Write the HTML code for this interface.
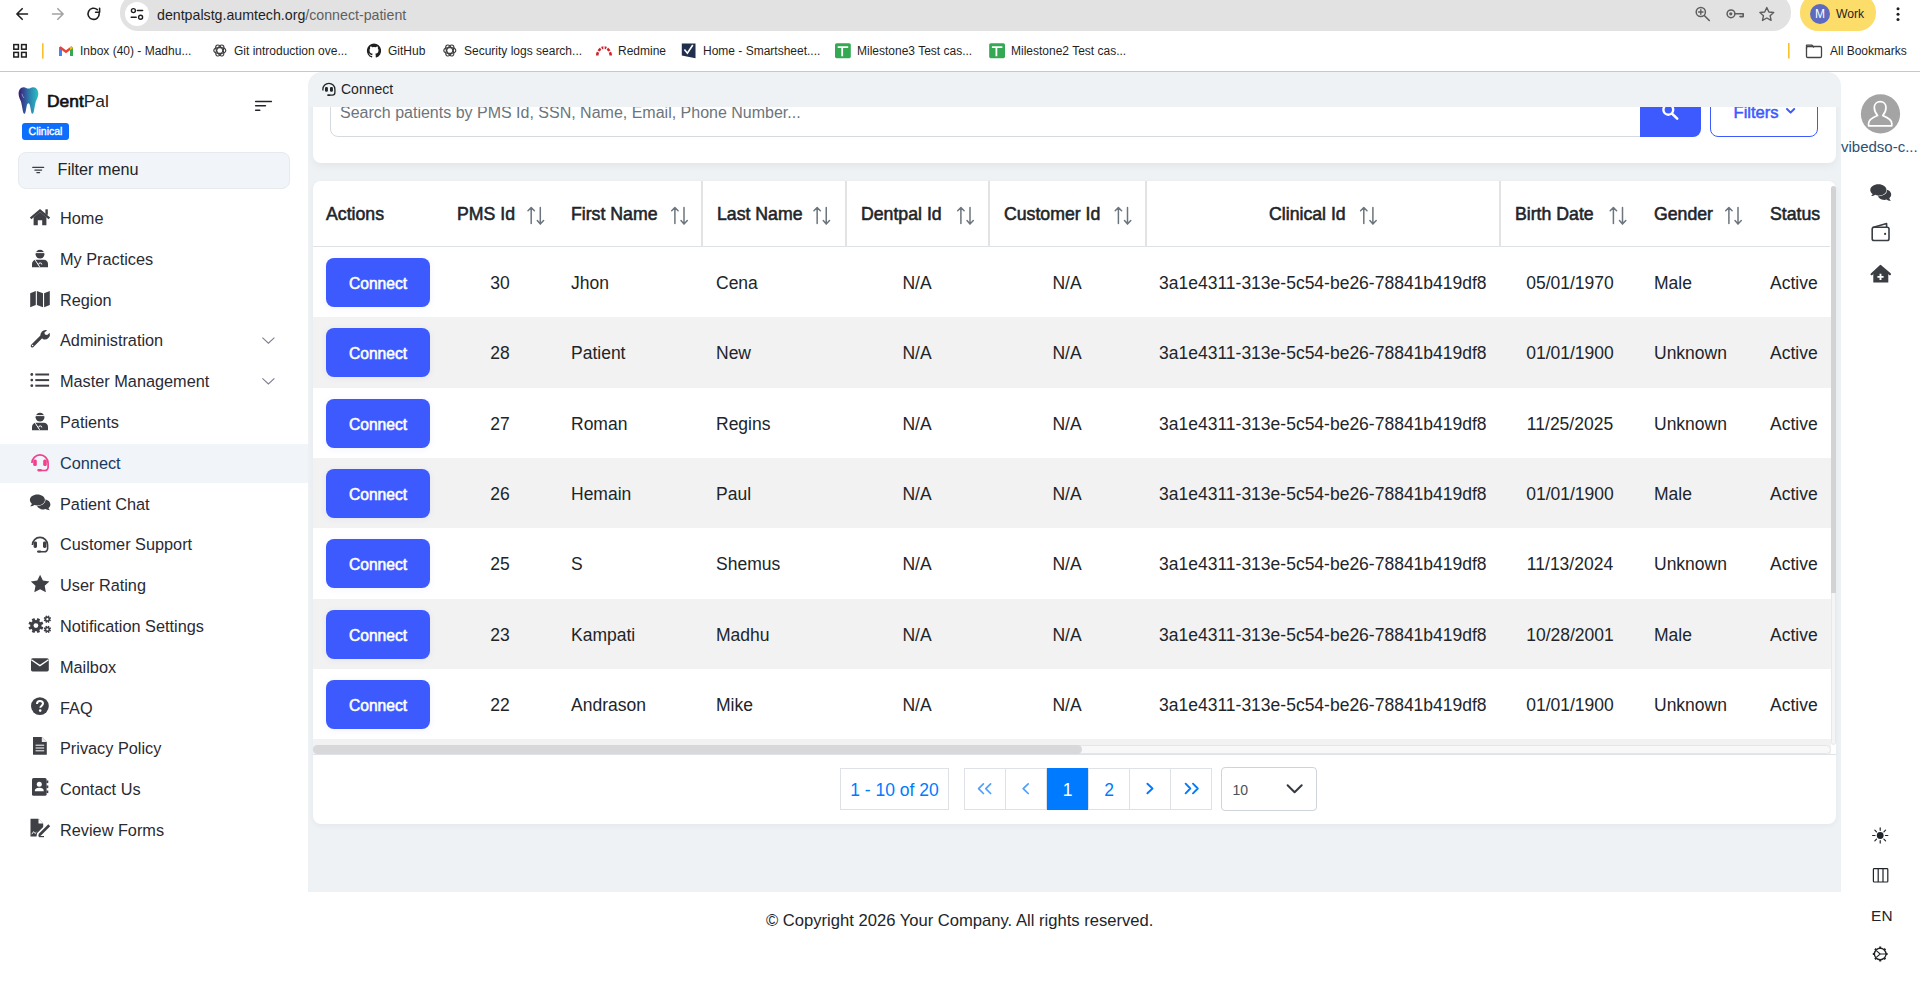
<!DOCTYPE html>
<html><head><meta charset="utf-8">
<style>
*{box-sizing:border-box;margin:0;padding:0}
html,body{width:1920px;height:982px;overflow:hidden;background:#fff;font-family:"Liberation Sans",sans-serif;color:#212529;position:relative}
.a{position:absolute}
.t{position:absolute;white-space:nowrap;line-height:1}
/* chrome */
#omni{left:120px;top:-6px;width:1671px;height:37px;border-radius:18px;background:#e2e2e2}
#siteinfo{left:125px;top:2px;width:24px;height:24px;border-radius:50%;background:#fff}
#url{left:157px;top:7.5px;font-size:14.2px;color:#1f1f1f}
#url span{color:#5f5f5f}
#work{left:1800px;top:-6px;width:76px;height:37px;border-radius:18px;background:#fcdd6a}
#mcirc{left:1810px;top:4px;width:20px;height:20px;border-radius:50%;background:#5c6bc0;color:#fff;font-size:12px;text-align:center;line-height:20px}
.bm{position:absolute;top:44px;font-size:12px;color:#1f1f1f;white-space:nowrap;line-height:14px}
#chromeline{left:0;top:71px;width:1920px;height:1px;background:#c8c8c8}
/* sidebar */
.mi{position:absolute;left:60px;font-size:16.3px;color:#2a2a33;white-space:nowrap;line-height:1}
.ic{position:absolute;left:30px}
/* main */
#main{left:308px;top:72px;width:1533px;height:820px;background:#eff2f5;border-radius:14px 14px 0 0}
.card{position:absolute;background:#fff;border-radius:8px}
.th{position:absolute;top:206px;font-size:17.7px;font-weight:normal;-webkit-text-stroke:0.55px #212529;color:#212529;white-space:nowrap;line-height:1}
.vl{position:absolute;top:181px;width:2px;height:66px;background:#e3e3e3}
.row{position:absolute;left:313px;width:1518px;height:70.3px}
.td{position:absolute;font-size:17.5px;color:#212529;white-space:nowrap;line-height:1}
.btn{position:absolute;left:326px;width:104px;height:49px;border-radius:8px;background:#3d5afe;color:#fff;font-weight:normal;-webkit-text-stroke:0.55px #fff;font-size:15.6px;text-align:center;line-height:52px;box-shadow:0 1px 6px rgba(61,90,254,.08)}
.pg{position:absolute;top:768px;height:42px;border:1px solid #dee2e6;color:#007bff;font-size:17.5px;text-align:center;line-height:42px}
.ri{position:absolute}
</style></head><body>
<!-- ============ BROWSER CHROME ============ -->
<div class="a" id="omni"></div>
<div class="a" id="siteinfo"></div>
<div class="t" id="url">dentpalstg.aumtech.org<span>/connect-patient</span></div>
<div class="a" id="work"></div>
<div class="a" id="mcirc">M</div>
<div class="t" style="left:1836px;top:8.1px;font-size:12.2px;color:#1f1f1f">Work</div>
<div class="a" id="chromeline"></div>
<svg class="a" style="left:0;top:0" width="1920" height="72" viewBox="0 0 1920 72">
<g fill="none" stroke-linecap="round" stroke-linejoin="round">
 <path d="M17 14H27.5M22.2 8.7L16.9 14L22.2 19.3" stroke="#1f1f1f" stroke-width="1.6"/>
 <path d="M63 14H52.5M57.8 8.7L63.1 14L57.8 19.3" stroke="#a3a3a3" stroke-width="1.6"/>
 <path d="M99.2 13.5A5.6 5.6 0 1 1 97.3 9.6" stroke="#1f1f1f" stroke-width="1.6"/>
 <path d="M99.6 8.2V12.2H95.6" stroke="#1f1f1f" stroke-width="1.6"/>
 <circle cx="133.4" cy="10.6" r="2" stroke="#1f1f1f" stroke-width="1.4"/>
 <path d="M137.4 10.6H142.6M131.2 17.3H136.2" stroke="#1f1f1f" stroke-width="1.5"/>
 <circle cx="140.6" cy="17.3" r="2" stroke="#1f1f1f" stroke-width="1.4"/>
 <circle cx="1700.8" cy="12" r="4.6" stroke="#5e5e5e" stroke-width="1.5"/>
 <path d="M1704.3 15.5L1709.3 20.5" stroke="#5e5e5e" stroke-width="1.6"/>
 <path d="M1700.8 9.8V14.2M1698.6 12H1703" stroke="#5e5e5e" stroke-width="1.4"/>
 <circle cx="1731" cy="13.8" r="3.9" stroke="#5e5e5e" stroke-width="1.5"/>
 <path d="M1734.8 13.8H1743.2V16.6H1740" stroke="#5e5e5e" stroke-width="1.6"/>
 <path d="M1766.8 7.6L1768.9 12L1773.7 12.5L1770.1 15.7L1771.1 20.4L1766.8 18L1762.5 20.4L1763.5 15.7L1759.9 12.5L1764.7 12Z" stroke="#5e5e5e" stroke-width="1.4"/>
 <rect x="1806.5" y="46.5" width="15" height="11" rx="1.2" stroke="#444" stroke-width="1.3"/>
 <path d="M1806.5 48.5V45.2H1812L1813.6 47" stroke="#444" stroke-width="1.3"/>
</g>
<g fill="#1f1f1f">
 <circle cx="1730.8" cy="13.8" r="1.6" fill="#5e5e5e"/>
 <circle cx="1898" cy="8.8" r="1.5"/><circle cx="1898" cy="14.2" r="1.5"/><circle cx="1898" cy="19.6" r="1.5"/>
 <g fill="none" stroke="#1f1f1f" stroke-width="1.5"><rect x="13.8" y="44.6" width="4.6" height="4.6"/><rect x="21.6" y="44.6" width="4.6" height="4.6"/><rect x="13.8" y="52.4" width="4.6" height="4.6"/><rect x="21.6" y="52.4" width="4.6" height="4.6"/></g>
 <rect x="42" y="43.2" width="1.6" height="15.5" fill="#fbc02d"/>
 <rect x="1788" y="43" width="1.6" height="15.5" fill="#fbc02d"/>
</g>
<!-- gmail -->
<g>
 <path d="M59 47.5V56H62V50.2L66 53.3L70 50.2V56H73V47.5L71.3 46.2L66 50.2L60.7 46.2Z" fill="#ea4335"/>
 <path d="M59 47.5V56H62V50.2Z" fill="#4285f4"/><path d="M73 47.5V56H70V50.2Z" fill="#34a853"/>
 <path d="M70 50.2L73 47.9V47.5L71.3 46.2L70 47.2Z" fill="#fbbc04"/>
</g>
<!-- openai style icons -->
<g fill="none" stroke="#3c3c3c" stroke-width="1.15"><ellipse cx="219.8" cy="50.5" rx="6" ry="2.9" transform="rotate(0 219.8 50.5)"/><ellipse cx="219.8" cy="50.5" rx="6" ry="2.9" transform="rotate(60 219.8 50.5)"/><ellipse cx="219.8" cy="50.5" rx="6" ry="2.9" transform="rotate(120 219.8 50.5)"/><ellipse cx="449.8" cy="50.5" rx="6" ry="2.9" transform="rotate(0 449.8 50.5)"/><ellipse cx="449.8" cy="50.5" rx="6" ry="2.9" transform="rotate(60 449.8 50.5)"/><ellipse cx="449.8" cy="50.5" rx="6" ry="2.9" transform="rotate(120 449.8 50.5)"/></g>
<!-- github -->
<path d="M374 43.5A7.2 7.2 0 0 0 371.7 57.5C372.1 57.6 372.2 57.3 372.2 57.1V55.8C370.2 56.2 369.8 54.9 369.8 54.9C369.5 54.1 369 53.9 369 53.9C368.3 53.4 369.1 53.4 369.1 53.4C369.8 53.5 370.2 54.2 370.2 54.2C370.8 55.3 371.9 55 372.3 54.8C372.4 54.3 372.6 54 372.8 53.8C371.2 53.6 369.5 53 369.5 50.3C369.5 49.5 369.8 48.9 370.2 48.4C370.1 48.2 369.9 47.5 370.3 46.5C370.3 46.5 370.9 46.3 372.3 47.2A7 7 0 0 1 375.7 47.2C377.1 46.3 377.7 46.5 377.7 46.5C378.1 47.5 377.9 48.2 377.8 48.4C378.2 48.9 378.5 49.5 378.5 50.3C378.5 53 376.8 53.6 375.2 53.8C375.5 54 375.7 54.4 375.7 55.1V57.1C375.7 57.3 375.8 57.6 376.3 57.5A7.2 7.2 0 0 0 374 43.5Z" fill="#1f1f1f"/>
<!-- redmine -->
<g fill="#d1212b"><path d="M596 55.5C596 51 599.5 46.2 604 46.2C608.5 46.2 612 51 612 55.5H609.4C609.4 52.5 607 48.8 604 48.8C601 48.8 598.6 52.5 598.6 55.5Z"/></g>
<g stroke="#fff" stroke-width="1.2"><path d="M596.5 50.6L599.8 52.4M600.2 46.6L601.8 49.8M607.8 46.6L606.2 49.8M611.5 50.6L608.2 52.4M604 45.5V48.9"/></g>
<!-- smartsheet -->
<path d="M681.8 43.4H695.5V58.3L681.8 55.6Z" fill="#1f2f4d"/>
<path d="M684.4 49.5L687.4 53.2L692.8 45" fill="none" stroke="#fff" stroke-width="1.6"/>
<!-- sheets -->
<rect x="835" y="43.2" width="15.8" height="15" rx="1.6" fill="#34a853"/>
<path d="M837.7 47.2H848.2M842.2 47.2V56.2" stroke="#fff" stroke-width="1.8"/>
<rect x="989.2" y="43.2" width="15.8" height="15" rx="1.6" fill="#34a853"/>
<path d="M991.9 47.2H1002.4M996.4 47.2V56.2" stroke="#fff" stroke-width="1.8"/>
</svg>


<div class="bm" style="left:80px">Inbox (40) - Madhu...</div>
<div class="bm" style="left:234px">Git introduction ove...</div>
<div class="bm" style="left:388px">GitHub</div>
<div class="bm" style="left:464px">Security logs search...</div>
<div class="bm" style="left:618px">Redmine</div>
<div class="bm" style="left:703px">Home - Smartsheet....</div>
<div class="bm" style="left:857px">Milestone3 Test cas...</div>
<div class="bm" style="left:1011px">Milestone2 Test cas...</div>
<div class="bm" style="left:1830px">All Bookmarks</div>

<!-- ============ SIDEBAR ============ -->
<div class="t" style="left:47px;top:92.6px;font-size:17.4px;color:#111"><span style="-webkit-text-stroke:0.7px #111">Dent</span><span style="color:#222">Pal</span></div>
<div class="a" style="left:22px;top:123px;width:47px;height:17px;border-radius:3px;background:#0d6efd;color:#fff;font-size:10.5px;-webkit-text-stroke:0.35px #fff;text-align:center;line-height:17px">Clinical</div>
<div class="a" style="left:18px;top:152px;width:272px;height:37px;border-radius:8px;background:#f1f4f8;border:1px solid #e6eaef"></div>
<div class="t" style="left:57.5px;top:161px;font-size:16.2px;color:#212529">Filter menu</div>
<div class="a" style="left:0;top:444px;width:308px;height:39px;background:#f1f4f8"></div>

<svg class="a" style="left:0;top:0" width="308" height="892" viewBox="0 0 308 892">
<defs><linearGradient id="tg" x1="0" x2="1" y1="0" y2="0"><stop offset="0" stop-color="#3b1a78"/><stop offset="0.55" stop-color="#2b7fae"/><stop offset="1" stop-color="#2cc0c4"/></linearGradient></defs>
<path d="M23.6 87.2C20.2 87.2 18.6 90.5 18.6 93.8C18.6 97.2 20.3 99.6 21 101.5C21.6 104 22 106.5 22.6 109.5C23 112.2 23.6 113.8 24.4 113.8C25.6 113.8 25.8 110.3 26.6 106.5C27.1 104.5 27.6 103.3 28.4 103.3C29.2 103.3 29.7 104.5 30.2 106.5C31 110.3 31.2 113.8 32.4 113.8C33.3 113.8 33.8 112.2 34.2 109.5C34.8 106.5 35.2 104 35.8 101.5C36.5 99.6 38.3 97.2 38.3 93.8C38.3 90.5 36.6 87.2 33.2 87.2C31 87.2 30 88.6 28.4 88.6C26.8 88.6 25.8 87.2 23.6 87.2Z" fill="url(#tg)"/>
<path d="M22 93.8Q22 96 24 98" stroke="#fff" stroke-width="0.6" fill="none" opacity="0.7"/>
<g fill="#212529"><rect x="254.9" y="100.7" width="17.2" height="1.5" rx=".7"/><rect x="254.9" y="105" width="11.3" height="1.5" rx=".7"/><rect x="254.9" y="109.4" width="5.6" height="1.5" rx=".7"/></g>
<g stroke="#3a3f44" stroke-width="1.3" stroke-linecap="round"><path d="M32.8 167.4H43.6M34.9 170.1H41.6M36.9 172.6H39.6"/></g>
<g fill="none" stroke="#7d7d92" stroke-width="1.1"><path d="M262.4 337.6L268.4 343.2L274.4 337.6"/><path d="M262.4 378.4L268.4 384L274.4 378.4"/></g>
<g fill="#3f4046">
 <!-- home -->
 <path d="M30.6 218.3L40 210.6L49.4 218.3" fill="none" stroke="#3f4046" stroke-width="2.3"/>
 <rect x="45.4" y="209.3" width="2.4" height="5.5"/>
 <path d="M33.6 217.2L40 212L46.4 217.2V225.3H42.2V220.3H37.8V225.3H33.6Z"/>
 <!-- user-md my practices -->
 <g id="umd">
 <path d="M35.6 254.2A4.4 4.4 0 0 1 44.4 254.2A4.4 4.4 0 0 1 35.6 254.2Z"/>
 <path d="M35.7 252.6H44.3" stroke="#fff" stroke-width="1"/>
 <path d="M32 267.2V264C32 261.5 33.8 259.8 36.2 259.8H43.8C46.2 259.8 48 261.5 48 264V267.2Z"/>
 <path d="M35.3 260.2L39.6 266.8M38.6 264.5A1.6 1.6 0 1 1 41.8 264.5" stroke="#fff" stroke-width="1" fill="none"/>
 </g>
 <use href="#umd" y="163"/>
 <!-- map -->
 <path d="M30.2 293.3L35.8 291V305L30.2 307.2Z"/><path d="M36.9 291L43 293.2V307.2L36.9 305Z"/><path d="M44.1 293.2L49.8 291V305L44.1 307.2Z"/>
 <!-- wrench -->
 <path d="M32.3 345.8L41.8 336.3" stroke="#3f4046" stroke-width="3.2" stroke-linecap="round"/>
 <path d="M47.2 330.2A5.2 5.2 0 0 0 40.7 336.8L43.1 339.2A5.2 5.2 0 0 0 49.7 332.7L47.2 335.1L44.9 334.6L44.4 332.4Z"/>
 <circle cx="32.6" cy="345.5" r="0.8" fill="#fff"/>
 <!-- list -->
 <circle cx="31.8" cy="374.5" r="1.4"/><circle cx="31.8" cy="380.1" r="1.4"/><circle cx="31.8" cy="385.7" r="1.4"/>
 <rect x="35.3" y="373.5" width="13.8" height="2"/><rect x="35.3" y="379.1" width="13.8" height="2"/><rect x="35.3" y="384.7" width="13.8" height="2"/>
 <!-- headset connect (pink) -->
 <g id="hs" fill="#f0418f">
 <path d="M31.9 463A8.1 8.1 0 0 1 48.1 463V467.3A3.2 3.2 0 0 1 44.9 470.5H41" fill="none" stroke="#f0418f" stroke-width="1.7"/>
 <rect x="33.2" y="459.4" width="3.6" height="6.6" rx="1.5"/><rect x="43.2" y="459.4" width="3.6" height="6.6" rx="1.5"/>
 <rect x="37.3" y="469" width="4.6" height="2.4" rx="1.1"/>
 </g>
 <!-- comments -->
 <path d="M43.6 499.2C47.4 499.2 50.4 501.6 50.4 504.6C50.4 506 49.7 507.3 48.5 508.2C48.8 509.2 49.5 509.9 50.1 510.3C48 510.3 46.6 509.6 45.7 509.1C45 509.4 44.3 509.6 43.6 509.6C39.8 509.6 36.8 507.2 36.8 504.6C36.8 501.6 39.8 499.2 43.6 499.2Z"/>
 <path d="M37.4 494.6C33.3 494.6 29.9 497 29.9 500C29.9 501.5 30.7 502.8 31.9 503.7C31.6 504.9 30.6 505.8 30.1 506.2C31.9 506.2 33.4 505.5 34.4 504.9C35.3 505.2 36.3 505.4 37.4 505.4C41.5 505.4 44.9 503 44.9 500C44.9 497 41.5 494.6 37.4 494.6Z" stroke="#fff" stroke-width="1.3" paint-order="stroke"/>
 <!-- headset support (dark) -->
 <g fill="#3f4046">
 <path d="M32.4 545A7.6 7.6 0 0 1 47.6 545V548.6A3.2 3.2 0 0 1 44.4 551.8H40.8" fill="none" stroke="#3f4046" stroke-width="1.6"/>
 <rect x="33.6" y="541.6" width="3.4" height="6.4" rx="1.4"/><rect x="43" y="541.6" width="3.4" height="6.4" rx="1.4"/>
 <rect x="37" y="550.4" width="4.4" height="2.3" rx="1.1"/>
 </g>
 <!-- star -->
 <path d="M40.1 574.8L42.9 580.6L49.4 581.4L44.7 585.8L45.9 592.3L40.1 589.2L34.3 592.3L35.5 585.8L30.8 581.4L37.3 580.6Z"/>
 <!-- cogs -->
<circle cx="35.9" cy="625.6" r="5.6" fill="#3f4046"/><rect x="34.45" y="618.10" width="2.9" height="7.50" fill="#3f4046" transform="rotate(22.5 35.9 625.6)"/><rect x="34.45" y="618.10" width="2.9" height="7.50" fill="#3f4046" transform="rotate(67.5 35.9 625.6)"/><rect x="34.45" y="618.10" width="2.9" height="7.50" fill="#3f4046" transform="rotate(112.5 35.9 625.6)"/><rect x="34.45" y="618.10" width="2.9" height="7.50" fill="#3f4046" transform="rotate(157.5 35.9 625.6)"/><rect x="34.45" y="618.10" width="2.9" height="7.50" fill="#3f4046" transform="rotate(202.5 35.9 625.6)"/><rect x="34.45" y="618.10" width="2.9" height="7.50" fill="#3f4046" transform="rotate(247.5 35.9 625.6)"/><rect x="34.45" y="618.10" width="2.9" height="7.50" fill="#3f4046" transform="rotate(292.5 35.9 625.6)"/><rect x="34.45" y="618.10" width="2.9" height="7.50" fill="#3f4046" transform="rotate(337.5 35.9 625.6)"/><circle cx="35.9" cy="625.6" r="2.4" fill="#fff"/><circle cx="47.4" cy="619.2" r="2.6" fill="#3f4046"/><rect x="46.65" y="615.50" width="1.5" height="3.70" fill="#3f4046" transform="rotate(22.5 47.4 619.2)"/><rect x="46.65" y="615.50" width="1.5" height="3.70" fill="#3f4046" transform="rotate(67.5 47.4 619.2)"/><rect x="46.65" y="615.50" width="1.5" height="3.70" fill="#3f4046" transform="rotate(112.5 47.4 619.2)"/><rect x="46.65" y="615.50" width="1.5" height="3.70" fill="#3f4046" transform="rotate(157.5 47.4 619.2)"/><rect x="46.65" y="615.50" width="1.5" height="3.70" fill="#3f4046" transform="rotate(202.5 47.4 619.2)"/><rect x="46.65" y="615.50" width="1.5" height="3.70" fill="#3f4046" transform="rotate(247.5 47.4 619.2)"/><rect x="46.65" y="615.50" width="1.5" height="3.70" fill="#3f4046" transform="rotate(292.5 47.4 619.2)"/><rect x="46.65" y="615.50" width="1.5" height="3.70" fill="#3f4046" transform="rotate(337.5 47.4 619.2)"/><circle cx="47.4" cy="619.2" r="1.1" fill="#fff"/><circle cx="47.4" cy="629.4" r="2.6" fill="#3f4046"/><rect x="46.65" y="625.70" width="1.5" height="3.70" fill="#3f4046" transform="rotate(22.5 47.4 629.4)"/><rect x="46.65" y="625.70" width="1.5" height="3.70" fill="#3f4046" transform="rotate(67.5 47.4 629.4)"/><rect x="46.65" y="625.70" width="1.5" height="3.70" fill="#3f4046" transform="rotate(112.5 47.4 629.4)"/><rect x="46.65" y="625.70" width="1.5" height="3.70" fill="#3f4046" transform="rotate(157.5 47.4 629.4)"/><rect x="46.65" y="625.70" width="1.5" height="3.70" fill="#3f4046" transform="rotate(202.5 47.4 629.4)"/><rect x="46.65" y="625.70" width="1.5" height="3.70" fill="#3f4046" transform="rotate(247.5 47.4 629.4)"/><rect x="46.65" y="625.70" width="1.5" height="3.70" fill="#3f4046" transform="rotate(292.5 47.4 629.4)"/><rect x="46.65" y="625.70" width="1.5" height="3.70" fill="#3f4046" transform="rotate(337.5 47.4 629.4)"/><circle cx="47.4" cy="629.4" r="1.1" fill="#fff"/>
 <!-- envelope -->
 <rect x="31" y="658.3" width="17.8" height="13.1" rx="1.6"/>
 <path d="M31.3 659.8L39.9 665.6L48.5 659.8" stroke="#fff" stroke-width="1.3" fill="none"/>
 <!-- question -->
 <circle cx="39.9" cy="706.1" r="8.9"/>
 <path d="M37 703.9C37 702.1 38.3 700.9 40 700.9C41.7 700.9 43 702 43 703.6C43 705.6 40.3 705.8 40.3 707.8" stroke="#fff" stroke-width="2" fill="none"/>
 <circle cx="40.2" cy="710.6" r="1.3" fill="#fff"/>
 <!-- file-alt -->
 <path d="M33 737H41.8L46.8 742V754.8H33Z"/>
 <path d="M41.8 737V742H46.8" fill="#fff" opacity="0.9"/>
 <path d="M35.6 745.2H44.2M35.6 748H44.2M35.6 750.8H44.2" stroke="#fff" stroke-width="1"/>
 <!-- address-book -->
 <rect x="32" y="778" width="14.6" height="17.8" rx="1.6"/>
 <rect x="46.4" y="780.5" width="1.9" height="2.6"/><rect x="46.4" y="785.5" width="1.9" height="2.6"/><rect x="46.4" y="790.5" width="1.9" height="2.6"/>
 <circle cx="39.3" cy="784.2" r="2.5" fill="#fff"/>
 <path d="M34.8 791.2C34.8 788.8 36.6 787.8 39.3 787.8C42 787.8 43.8 788.8 43.8 791.2Z" fill="#fff"/>
 <!-- file-signature -->
 <path d="M30.5 818.7H38.5L43.2 823.4V827L37 833.2L36.5 836.5H30.5Z"/>
 <path d="M38.5 818.7V823.4H43.2" fill="#fff"/>
 <path d="M38.8 833.8L48.3 824.3L50.2 826.2L40.7 835.7L38.2 836.4Z"/>
 <path d="M31.8 834.2L33.6 831.6L35 833.5L36.4 832.2" stroke="#fff" stroke-width="0.9" fill="none"/>
 <rect x="39" y="836" width="5" height="1.2"/>
</g>
</svg>


<div class="mi" style="top:210.0px">Home</div>
<div class="mi" style="top:250.8px">My Practices</div>
<div class="mi" style="top:291.6px">Region</div>
<div class="mi" style="top:332.4px">Administration</div>
<div class="mi" style="top:373.2px">Master Management</div>
<div class="mi" style="top:414.0px">Patients</div>
<div class="mi" style="top:454.8px;color:#173a5e">Connect</div>
<div class="mi" style="top:495.6px">Patient Chat</div>
<div class="mi" style="top:536.4px">Customer Support</div>
<div class="mi" style="top:577.2px">User Rating</div>
<div class="mi" style="top:618.0px">Notification Settings</div>
<div class="mi" style="top:658.8px">Mailbox</div>
<div class="mi" style="top:699.6px">FAQ</div>
<div class="mi" style="top:740.4px">Privacy Policy</div>
<div class="mi" style="top:781.2px">Contact Us</div>
<div class="mi" style="top:822.0px">Review Forms</div>
<!-- ============ MAIN ============ -->
<div class="a" id="main"></div>
<!-- search card (clipped by breadcrumb) -->
<div class="a" style="left:308px;top:107px;width:1533px;height:79px;overflow:hidden">
  <div class="card" style="left:5px;top:-41px;width:1523px;height:96.5px;box-shadow:0 3px 8px rgba(0,0,0,.05)"></div>
  <div class="a" style="left:22px;top:-20px;width:1320px;height:50px;border:1px solid #d5dae0;border-radius:8px 0 0 8px;background:#fff"></div>
  <div class="t" style="left:32px;top:-2px;font-size:16px;color:#6c757d">Search patients by PMS Id, SSN, Name, Email, Phone Number...</div>
  <div class="a" style="left:1332px;top:-20px;width:61px;height:50px;border-radius:0 8px 8px 0;background:#3d5afe"></div>
  <div class="a" style="left:1402px;top:-20px;width:108px;height:50px;border-radius:8px;border:1px solid #3d5afe;background:#fff"></div>
  <div class="t" style="left:1425.5px;top:-2px;font-size:16.6px;-webkit-text-stroke:0.5px #3d5afe;color:#3d5afe">Filters</div>
  <svg class="a" style="left:0;top:0" width="1533" height="80" viewBox="308 107 1533 80">
 <circle cx="1668.3" cy="109.8" r="4.9" fill="none" stroke="#fff" stroke-width="2.4"/>
 <path d="M1672 113.6L1677.2 118.6" stroke="#fff" stroke-width="2.6" stroke-linecap="round"/>
 <path d="M1787 109L1790.6 112.6L1794.2 109" fill="none" stroke="#3d5afe" stroke-width="2" stroke-linecap="round" stroke-linejoin="round"/>
</svg>
</div>
<div class="t" style="left:341px;top:82px;font-size:14px;color:#212529">Connect</div>

<!-- table card -->
<div class="card" style="left:313px;top:181px;width:1523px;height:643px;box-shadow:0 2px 5px rgba(30,40,60,.05)"></div>
<div class="a" style="left:313px;top:246px;width:1517px;height:1px;background:#dee2e6"></div>
<div class="vl" style="left:701px"></div>
<div class="vl" style="left:845px"></div>
<div class="vl" style="left:988px"></div>
<div class="vl" style="left:1145px"></div>
<div class="vl" style="left:1499px"></div>

<div class="th" style="left:326px">Actions</div>
<div class="th" style="left:457px">PMS Id</div>
<div class="th" style="left:571px">First Name</div>
<div class="th" style="left:717px">Last Name</div>
<div class="th" style="left:861px">Dentpal Id</div>
<div class="th" style="left:1004px">Customer Id</div>
<div class="th" style="left:1269px">Clinical Id</div>
<div class="th" style="left:1515px">Birth Date</div>
<div class="th" style="left:1654px">Gender</div>
<div class="th" style="left:1770px">Status</div>

<!--ROWS--><div id="rows">
<div class="row" style="top:247px;height:70px;background:#fff"></div>
<div class="btn" style="top:258px">Connect</div>
<div class="td" style="left:500px;top:275px;transform:translateX(-50%)">30</div>
<div class="td" style="left:571px;top:275px">Jhon</div>
<div class="td" style="left:716px;top:275px">Cena</div>
<div class="td" style="left:917px;top:275px;transform:translateX(-50%)">N/A</div>
<div class="td" style="left:1067px;top:275px;transform:translateX(-50%)">N/A</div>
<div class="td" style="left:1159px;top:275px">3a1e4311-313e-5c54-be26-78841b419df8</div>
<div class="td" style="left:1570px;top:275px;transform:translateX(-50%)">05/01/1970</div>
<div class="td" style="left:1654px;top:275px">Male</div>
<div class="td" style="left:1770px;top:275px">Active</div>
<div class="row" style="top:317px;height:71px;background:#f2f2f2"></div>
<div class="btn" style="top:328px">Connect</div>
<div class="td" style="left:500px;top:345px;transform:translateX(-50%)">28</div>
<div class="td" style="left:571px;top:345px">Patient</div>
<div class="td" style="left:716px;top:345px">New</div>
<div class="td" style="left:917px;top:345px;transform:translateX(-50%)">N/A</div>
<div class="td" style="left:1067px;top:345px;transform:translateX(-50%)">N/A</div>
<div class="td" style="left:1159px;top:345px">3a1e4311-313e-5c54-be26-78841b419df8</div>
<div class="td" style="left:1570px;top:345px;transform:translateX(-50%)">01/01/1900</div>
<div class="td" style="left:1654px;top:345px">Unknown</div>
<div class="td" style="left:1770px;top:345px">Active</div>
<div class="row" style="top:388px;height:70px;background:#fff"></div>
<div class="btn" style="top:399px">Connect</div>
<div class="td" style="left:500px;top:416px;transform:translateX(-50%)">27</div>
<div class="td" style="left:571px;top:416px">Roman</div>
<div class="td" style="left:716px;top:416px">Regins</div>
<div class="td" style="left:917px;top:416px;transform:translateX(-50%)">N/A</div>
<div class="td" style="left:1067px;top:416px;transform:translateX(-50%)">N/A</div>
<div class="td" style="left:1159px;top:416px">3a1e4311-313e-5c54-be26-78841b419df8</div>
<div class="td" style="left:1570px;top:416px;transform:translateX(-50%)">11/25/2025</div>
<div class="td" style="left:1654px;top:416px">Unknown</div>
<div class="td" style="left:1770px;top:416px">Active</div>
<div class="row" style="top:458px;height:70px;background:#f2f2f2"></div>
<div class="btn" style="top:469px">Connect</div>
<div class="td" style="left:500px;top:486px;transform:translateX(-50%)">26</div>
<div class="td" style="left:571px;top:486px">Hemain</div>
<div class="td" style="left:716px;top:486px">Paul</div>
<div class="td" style="left:917px;top:486px;transform:translateX(-50%)">N/A</div>
<div class="td" style="left:1067px;top:486px;transform:translateX(-50%)">N/A</div>
<div class="td" style="left:1159px;top:486px">3a1e4311-313e-5c54-be26-78841b419df8</div>
<div class="td" style="left:1570px;top:486px;transform:translateX(-50%)">01/01/1900</div>
<div class="td" style="left:1654px;top:486px">Male</div>
<div class="td" style="left:1770px;top:486px">Active</div>
<div class="row" style="top:528px;height:71px;background:#fff"></div>
<div class="btn" style="top:539px">Connect</div>
<div class="td" style="left:500px;top:556px;transform:translateX(-50%)">25</div>
<div class="td" style="left:571px;top:556px">S</div>
<div class="td" style="left:716px;top:556px">Shemus</div>
<div class="td" style="left:917px;top:556px;transform:translateX(-50%)">N/A</div>
<div class="td" style="left:1067px;top:556px;transform:translateX(-50%)">N/A</div>
<div class="td" style="left:1159px;top:556px">3a1e4311-313e-5c54-be26-78841b419df8</div>
<div class="td" style="left:1570px;top:556px;transform:translateX(-50%)">11/13/2024</div>
<div class="td" style="left:1654px;top:556px">Unknown</div>
<div class="td" style="left:1770px;top:556px">Active</div>
<div class="row" style="top:599px;height:70px;background:#f2f2f2"></div>
<div class="btn" style="top:610px">Connect</div>
<div class="td" style="left:500px;top:627px;transform:translateX(-50%)">23</div>
<div class="td" style="left:571px;top:627px">Kampati</div>
<div class="td" style="left:716px;top:627px">Madhu</div>
<div class="td" style="left:917px;top:627px;transform:translateX(-50%)">N/A</div>
<div class="td" style="left:1067px;top:627px;transform:translateX(-50%)">N/A</div>
<div class="td" style="left:1159px;top:627px">3a1e4311-313e-5c54-be26-78841b419df8</div>
<div class="td" style="left:1570px;top:627px;transform:translateX(-50%)">10/28/2001</div>
<div class="td" style="left:1654px;top:627px">Male</div>
<div class="td" style="left:1770px;top:627px">Active</div>
<div class="row" style="top:669px;height:70px;background:#fff"></div>
<div class="btn" style="top:680px">Connect</div>
<div class="td" style="left:500px;top:697px;transform:translateX(-50%)">22</div>
<div class="td" style="left:571px;top:697px">Andrason</div>
<div class="td" style="left:716px;top:697px">Mike</div>
<div class="td" style="left:917px;top:697px;transform:translateX(-50%)">N/A</div>
<div class="td" style="left:1067px;top:697px;transform:translateX(-50%)">N/A</div>
<div class="td" style="left:1159px;top:697px">3a1e4311-313e-5c54-be26-78841b419df8</div>
<div class="td" style="left:1570px;top:697px;transform:translateX(-50%)">01/01/1900</div>
<div class="td" style="left:1654px;top:697px">Unknown</div>
<div class="td" style="left:1770px;top:697px">Active</div>
</div><!--/ROWS-->

<!-- scrollbars -->
<div class="a" style="left:313px;top:739px;width:1518px;height:15px;background:#f2f2f2"></div>
<div class="a" style="left:313px;top:745px;width:1518px;height:9px;border-radius:4.5px;background:#f8f8f8;border:1px solid #e6e6e8"></div>
<div class="a" style="left:313px;top:745px;width:769px;height:9px;border-radius:4.5px;background:#d8d8da"></div>
<div class="a" style="left:313px;top:753.5px;width:1523px;height:1px;background:#dfe3e8"></div>
<div class="a" style="left:1831px;top:186px;width:5px;height:559px;border-radius:2.5px;background:#f5f5f5;border:1px solid #e8e8ea"></div>
<div class="a" style="left:1831px;top:186px;width:5px;height:407px;border-radius:2.5px 2.5px 0 0;background:#d3d3d6"></div>
<!-- pagination -->
<div class="pg" style="left:840px;width:109px">1 - 10 of 20</div>
<div class="pg" style="left:964px;width:42px"></div>
<div class="pg" style="left:1005px;width:42px"></div>
<div class="pg" style="left:1047px;width:41px;background:#007bff;border-color:#007bff;color:#fff">1</div>
<div class="pg" style="left:1088px;width:42px">2</div>
<div class="pg" style="left:1129px;width:42px"></div>
<div class="pg" style="left:1170px;width:42px"></div>
<div class="a" style="left:1221px;top:767px;width:96px;height:44px;border:1px solid #ced4da;border-radius:4px"></div>
<div class="t" style="left:1232.5px;top:782.6px;font-size:14px;color:#495057">10</div>

<svg class="a" style="left:0;top:0" width="1920" height="982" viewBox="0 0 1920 982">
<defs><g id="srt" fill="none" stroke="#6c757d" stroke-width="1.5" stroke-linecap="round" stroke-linejoin="round"><path d="M3.4 207.6V223.6M0.2 210.7L3.4 207.5L6.6 210.7M12.5 207.6V224M9.5 220.6L12.5 224.1L15.8 220.6"/></g></defs>
<use href="#srt" x="527.80"/>
<use href="#srt" x="671.50"/>
<use href="#srt" x="813.75"/>
<use href="#srt" x="957.50"/>
<use href="#srt" x="1115.00"/>
<use href="#srt" x="1360.40"/>
<use href="#srt" x="1610.00"/>
<use href="#srt" x="1725.50"/>
<!-- breadcrumb headset -->
<g fill="#212529">
 <path d="M322.9 90.6V89.3A6 6 0 0 1 334.9 89.3V92.6A2.6 2.6 0 0 1 332.3 95.2H330" fill="none" stroke="#212529" stroke-width="1.3"/>
 <rect x="325" y="86.9" width="2.9" height="4.9" rx="1.2"/><rect x="330" y="86.9" width="2.9" height="4.9" rx="1.2"/>
 <rect x="327.2" y="94.3" width="3.2" height="1.8" rx=".8"/>
</g>
<!-- pagination arrows -->
<g fill="none" stroke-linecap="round" stroke-linejoin="round" stroke-width="1.7">
 <path d="M983.4 783.9L978.6 788.7L983.4 793.5M990.6 783.9L985.8 788.7L990.6 793.5" stroke="#4f9fff"/>
 <path d="M1028.2 783.9L1023.2 788.7L1028.2 793.5" stroke="#4f9fff"/>
 <path d="M1147.4 783.7L1152.5 788.5L1147.4 793.3" stroke="#007bff" stroke-width="1.9"/>
 <path d="M1185.6 783.7L1190.3 788.5L1185.6 793.3M1193 783.7L1197.8 788.5L1193 793.3" stroke="#007bff" stroke-width="1.9"/>
 <path d="M1287.6 785.2L1294.6 792.2L1301.7 785.2" stroke="#343a40" stroke-width="2"/>
</g>
</svg>

<!-- right rail -->
<svg class="a" style="left:1840px;top:72px" width="80" height="910" viewBox="1840 72 80 910">
 <circle cx="1880.5" cy="113.9" r="19.6" fill="#a4a4a4"/>
 <path d="M1877.6 115.5C1875.2 113 1874.3 110 1874.3 107.5C1874.3 104 1876.8 101.6 1880.2 101.6C1883.6 101.6 1886 104 1886 107.5C1886 110 1885.1 113 1882.7 115.5C1886.5 117 1891.8 119 1891.8 123.5V125.8H1868.6V123.5C1868.6 119 1873.8 117 1877.6 115.5Z" fill="none" stroke="#fff" stroke-width="1.7" stroke-linejoin="round"/>
 <g fill="#3a3d42">
  <path d="M1884.4 189.2C1888.2 189.2 1891.2 191.6 1891.2 194.6C1891.2 196 1890.5 197.3 1889.3 198.2C1889.6 199.3 1890.3 200.1 1890.9 200.7C1888.8 200.7 1887.4 200 1886.5 199.4C1885.8 199.7 1885.1 199.9 1884.4 199.9C1880.6 199.9 1877.6 197.5 1877.6 194.6C1877.6 191.6 1880.6 189.2 1884.4 189.2Z"/>
  <path d="M1878.4 184.3C1873.9 184.3 1870.3 186.8 1870.3 190C1870.3 191.6 1871.2 193 1872.6 194C1872.3 195 1871.5 195.7 1870.9 196.1C1872.8 196.1 1874.3 195.4 1875.2 194.8C1876.2 195.1 1877.3 195.7 1878.4 195.7C1882.9 195.7 1886.5 193.2 1886.5 190C1886.5 186.8 1882.9 184.3 1878.4 184.3Z" stroke="#fff" stroke-width="1.3" paint-order="stroke"/>
 </g>
 <g fill="none" stroke="#3a3d42" stroke-width="1.6" stroke-linejoin="round">
  <rect x="1872.2" y="227.2" width="16.8" height="13.3" rx="1.8"/>
  <path d="M1872.6 227.6L1886.6 223.6V227.2"/>
 </g>
 <circle cx="1885.1" cy="233.9" r="1.1" fill="#3a3d42"/>
 <path d="M1871.6 274.2L1880.5 266L1889.9 274.2" fill="none" stroke="#3a3d42" stroke-width="2.2" stroke-linecap="round" stroke-linejoin="round"/>
 <path d="M1873.3 273.2L1880.5 266.8L1888.3 273.2V282.4H1873.3Z" fill="#3a3d42"/>
 <path d="M1880.5 273.8V280M1877.4 276.9H1883.6" stroke="#fff" stroke-width="1.9"/>
 <g stroke="#212529" stroke-width="1.2" stroke-linecap="round"><path d="M1885.40 835.50L1887.80 835.50M1883.88 839.18L1885.57 840.87M1880.20 840.70L1880.20 843.10M1876.52 839.18L1874.83 840.87M1875.00 835.50L1872.60 835.50M1876.52 831.82L1874.83 830.13M1880.20 830.30L1880.20 827.90M1883.88 831.82L1885.57 830.13"/></g>
 <circle cx="1880.2" cy="835.5" r="3.4" fill="#212529"/>
 <g fill="none" stroke="#212529" stroke-width="1.2"><rect x="1873.4" y="868.6" width="14.4" height="13.4" rx="0.8"/><path d="M1878.2 868.6V882M1883 868.6V882"/></g>
 <g fill="none" stroke="#212529"><circle cx="1880.2" cy="954" r="5.8" stroke-width="1.4"/><path d="M1885.80 954.00L1887.60 954.00M1884.16 957.96L1885.43 959.23M1880.20 959.60L1880.20 961.40M1876.24 957.96L1874.97 959.23M1874.60 954.00L1872.80 954.00M1876.24 950.04L1874.97 948.77M1880.20 948.40L1880.20 946.60M1884.16 950.04L1885.43 948.77" stroke-width="2"/><path d="M1880.2 954L1876.3 950.6M1880.2 954H1885.2M1880.2 954L1876.3 957.4" stroke-width="1.1"/></g>
</svg>
<div class="t" style="left:1841px;top:139px;font-size:15px;color:#2c5073">vibedso-c...</div>
<div class="t" style="left:1871px;top:908px;font-size:15.4px;color:#212529;letter-spacing:0.2px">EN</div>

<!-- footer -->
<div class="t" style="left:766px;top:913px;font-size:16.6px;color:#212529">© Copyright 2026 Your Company. All rights reserved.</div>


</body></html>
